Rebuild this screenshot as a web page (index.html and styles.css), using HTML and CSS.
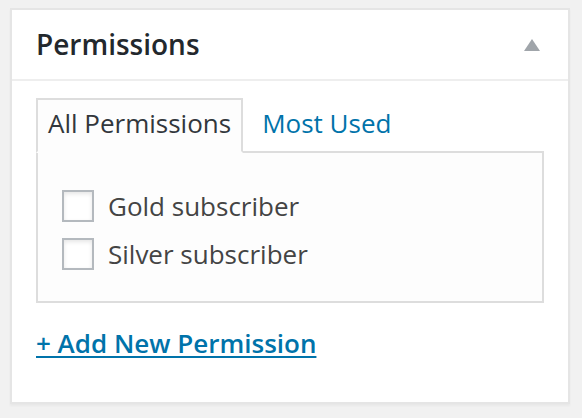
FILE: index.html
```html
<!DOCTYPE html>
<html lang="en">
<head>
<meta charset="utf-8">
<title>Permissions</title>
<link rel="stylesheet" href="styles.css">
</head>
<body>
<div class="postbox">
  <div class="hndle">
    <h2 class="title">Permissions</h2>
    <span class="toggle" aria-hidden="true"></span>
  </div>
  <div class="inside">
    <ul class="tabs">
      <li class="tab active">All Permissions</li>
      <li class="tab link">Most Used</li>
    </ul>
    <div class="panel">
      <ul class="checklist">
        <li class="row"><span class="checkbox"></span><span class="label">Gold subscriber</span></li>
        <li class="row"><span class="checkbox"></span><span class="label">Silver subscriber</span></li>
      </ul>
    </div>
    <p class="adder"><a href="#" class="add-link">+ Add New Permission</a></p>
  </div>
</div>
</body>
</html>
```
FILE: styles.css
```css
* { box-sizing: border-box; }
html, body { margin: 0; padding: 0; }
body {
  background: #f1f1f1;
  font-family: "Open Sans", "Liberation Sans", sans-serif;
  width: 582px;
  height: 418px;
  padding: 8px 12px 0 10px;
}
.postbox {
  width: 560px;
  height: 396px;
  background: #fff;
  border: 2px solid #e5e5e5;
  box-shadow: 0 2px 2px rgba(0, 0, 0, 0.04);
}
.hndle {
  display: flex;
  align-items: center;
  justify-content: space-between;
  border-bottom: 2px solid #eeeeee;
  padding: 15px 28px 15px 24px;
}
.title {
  margin: 0;
  font-size: 28px;
  font-weight: 600;
  line-height: 39.2px;
  color: #23282d;
}
.toggle {
  width: 0;
  height: 0;
  border-left: 8px solid transparent;
  border-right: 8px solid transparent;
  border-bottom: 12px solid #a0a5aa;
  margin-top: 0;
}
.inside {
  padding: 17px 24px 0 24px;
}
.tabs {
  list-style: none;
  margin: 0;
  padding: 0;
  display: flex;
  font-size: 26px;
  line-height: 35.1px;
}
.tab {
  padding: 6px 10px 10px 10px;
  border: 2px solid transparent;
}
.tab.active {
  position: relative;
  z-index: 1;
  color: #32373c;
  background: #fdfdfd;
  border-color: #dddddd;
  border-bottom-color: #fdfdfd;
}
.tab.link {
  color: #0073aa;
  margin-left: 7px;
}
.panel {
  margin-top: -2px;
  width: 508px;
  height: 152px;
  background: #fdfdfd;
  border: 2px solid #dddddd;
  padding: 31px 24px 0 24px;
}
.checklist {
  list-style: none;
  margin: 0;
  padding: 0;
  display: flex;
  flex-direction: column;
  gap: 4px;
}
.row {
  display: flex;
  align-items: center;
  height: 44px;
  font-size: 26px;
  line-height: 44px;
  color: #444444;
}
.checkbox {
  width: 32px;
  height: 32px;
  border: 2px solid #b4b9be;
  background: #fff;
  box-shadow: inset 0 2px 4px rgba(0, 0, 0, 0.1);
  margin-right: 14px;
  flex: none;
}
.adder {
  margin: 22px 0 0 0;
  font-size: 26px;
  line-height: 36.4px;
}
.add-link {
  color: #0073aa;
  font-weight: 600;
  text-decoration: underline;
  text-decoration-thickness: 2px;
  text-underline-offset: 3px;
}
```
